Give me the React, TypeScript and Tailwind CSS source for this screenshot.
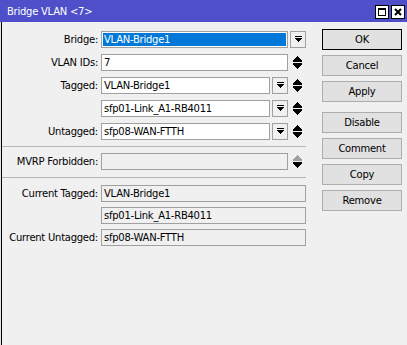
import React from 'react';

const DropIcon: React.FC = () => (
  <svg width="7" height="7" viewBox="0 0 7 7" shapeRendering="crispEdges">
    <rect x="0" y="0" width="7" height="1" fill="#000" />
    <rect x="0" y="2" width="7" height="1" fill="#000" />
    <rect x="1" y="3" width="5" height="1" fill="#000" />
    <rect x="2" y="4" width="3" height="1" fill="#000" />
    <rect x="3" y="5" width="1" height="1" fill="#000" />
  </svg>
);

const UpDown: React.FC<{ upColor?: string }> = ({ upColor = '#000' }) => (
  <div className="w-[18px] h-[17px] flex items-center justify-center">
    <svg width="9" height="13" viewBox="0 0 9 13" shapeRendering="crispEdges">
      <rect x="4" y="0" width="1" height="1" fill={upColor} />
      <rect x="3" y="1" width="3" height="1" fill={upColor} />
      <rect x="2" y="2" width="5" height="1" fill={upColor} />
      <rect x="1" y="3" width="7" height="1" fill={upColor} />
      <rect x="0" y="4" width="9" height="2" fill={upColor} />
      <rect x="0" y="7" width="9" height="2" fill="#000" />
      <rect x="1" y="9" width="7" height="1" fill="#000" />
      <rect x="2" y="10" width="5" height="1" fill="#000" />
      <rect x="3" y="11" width="3" height="1" fill="#000" />
      <rect x="4" y="12" width="1" height="1" fill="#000" />
    </svg>
  </div>
);

const DropBtn: React.FC = () => (
  <div className="ml-[2px] w-[16px] h-[17px] border border-[#a0a0a0] bg-[#f0f0f0] flex items-center justify-center">
    <DropIcon />
  </div>
);

const Field: React.FC<{ w: string; text?: string; grey?: boolean }> = ({ w, text, grey }) => (
  <div
    className={`${w} h-[17px] border border-[#a0a0a0] ${grey ? 'bg-[#f0f0f0]' : 'bg-white'} px-[2px] flex items-center whitespace-nowrap overflow-hidden`}
  >
    {text}
  </div>
);

const Row: React.FC<{ label?: string; className?: string; children: React.ReactNode }> = ({ label, className = '', children }) => (
  <div className={`flex items-center h-[17px] ${className}`}>
    <div className="w-[96px] text-right whitespace-nowrap">{label}</div>
    <div className="ml-[3px] flex items-center">{children}</div>
  </div>
);

const Btn: React.FC<{ label: string; primary?: boolean; className?: string }> = ({ label, primary, className = '' }) => (
  <div
    className={`h-[21px] w-[80px] flex items-center justify-center bg-[#e1e1e1] border ${primary ? 'border-black' : 'border-[#adadad]'} ${className}`}
  >
    {label}
  </div>
);

export default function App() {
  return (
    <div
      className="w-[407px] h-[345px] bg-[#f0f0f0] overflow-hidden flex flex-col text-[10px] tracking-[-0.25px] text-black"
      style={{ fontFamily: '"DejaVu Sans", Verdana, sans-serif' }}
    >
      <div className="h-[22px] bg-[#4e4fc9] flex items-center pl-[7px] pr-[2px] shrink-0">
        <span className="text-white flex-1">Bridge VLAN &lt;7&gt;</span>
        <div className="flex items-center gap-[2px] mt-[2px]">
          <div className="w-[14px] h-[14px] bg-white border border-black flex items-center justify-center">
            <svg width="8" height="8" viewBox="0 0 8 8" shapeRendering="crispEdges">
              <rect x="0" y="0" width="8" height="2" fill="#000" />
              <rect x="0" y="0" width="1" height="8" fill="#000" />
              <rect x="7" y="0" width="1" height="8" fill="#000" />
              <rect x="0" y="7" width="8" height="1" fill="#000" />
            </svg>
          </div>
          <div className="w-[14px] h-[14px] bg-white border border-black flex items-center justify-center">
            <svg width="8" height="8" viewBox="0 0 8 8">
              <path d="M1 1 L7 7 M7 1 L1 7" stroke="#000" strokeWidth="2" />
            </svg>
          </div>
        </div>
      </div>

      <div className="flex flex-1">
        <div className="w-[1px] bg-[#e4e4e4]" />
        <div className="flex-1 flex border-l border-black">
          <div className="w-[304px] pt-[9px] flex flex-col">
            <Row label="Bridge:">
              <div className="w-[187px] h-[17px] border border-[#a0a0a0] bg-white p-[1px] flex">
                <div className="flex-1 bg-[#0078d7] text-white px-[1px] flex items-center">VLAN-Bridge1</div>
              </div>
              <DropBtn />
            </Row>
            <Row label="VLAN IDs:" className="mt-[6px]">
              <Field w="w-[187px]" text="7" />
              <UpDown />
            </Row>
            <Row label="Tagged:" className="mt-[6px]">
              <Field w="w-[169px]" text="VLAN-Bridge1" />
              <DropBtn />
              <UpDown />
            </Row>
            <Row className="mt-[6px]">
              <Field w="w-[169px]" text="sfp01-Link_A1-RB4011" />
              <DropBtn />
              <UpDown />
            </Row>
            <Row label="Untagged:" className="mt-[6px]">
              <Field w="w-[169px]" text="sfp08-WAN-FTTH" />
              <DropBtn />
              <UpDown />
            </Row>
            <div className="mt-[6px] border-t border-[#b4b4b4]" />
            <Row label="MVRP Forbidden:" className="mt-[6px]">
              <Field w="w-[187px]" grey />
              <UpDown upColor="#a0a0a0" />
            </Row>
            <div className="mt-[7px] border-t border-[#b4b4b4]" />
            <Row label="Current Tagged:" className="mt-[7px]">
              <Field w="w-[205px]" grey text="VLAN-Bridge1" />
            </Row>
            <Row className="mt-[5px]">
              <Field w="w-[205px]" grey text="sfp01-Link_A1-RB4011" />
            </Row>
            <Row label="Current Untagged:" className="mt-[5px]">
              <Field w="w-[205px]" grey text="sfp08-WAN-FTTH" />
            </Row>
          </div>

          <div className="ml-[16px] pt-[7px] flex flex-col">
            <Btn label="OK" primary />
            <Btn label="Cancel" className="mt-[5px]" />
            <Btn label="Apply" className="mt-[5px]" />
            <Btn label="Disable" className="mt-[10px]" />
            <Btn label="Comment" className="mt-[5px]" />
            <Btn label="Copy" className="mt-[5px]" />
            <Btn label="Remove" className="mt-[5px]" />
          </div>
        </div>
      </div>
    </div>
  );
}
